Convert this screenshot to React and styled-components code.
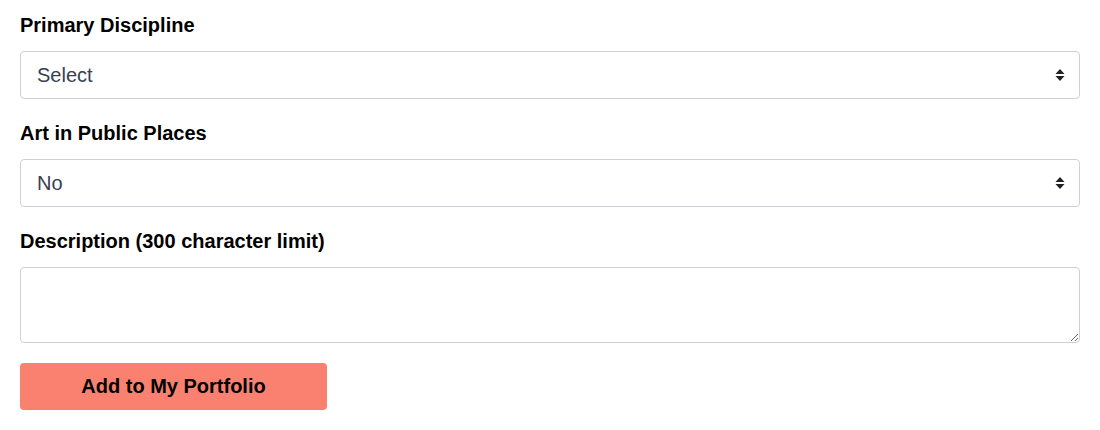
import React from "react";
import styled, { createGlobalStyle } from "styled-components";

const GlobalStyle = createGlobalStyle`
  body {
    margin: 0;
    background: #fff;
    font-family: "Liberation Sans", Arial, sans-serif;
  }
`;

const Form = styled.form`
  padding: 15px 20px;
  display: flex;
  flex-direction: column;
`;

const Field = styled.div`
  display: flex;
  flex-direction: column;
  margin-bottom: ${(p) => p.gap || 24}px;
`;

const Label = styled.label`
  font-size: 20px;
  font-weight: 700;
  line-height: 21px;
  color: #000;
  margin-bottom: 15px;
`;

const SelectWrap = styled.div`
  position: relative;
`;

const Select = styled.select`
  appearance: none;
  width: 100%;
  height: 48px;
  border: 1px solid #cdd1d6;
  border-radius: 4px;
  background: #fff;
  padding: 0 40px 0 16px;
  font-family: inherit;
  font-size: 20px;
  color: #374151;
`;

const Arrows = styled.svg`
  position: absolute;
  right: 15px;
  top: 50%;
  transform: translateY(-50%);
  pointer-events: none;
`;

const TextArea = styled.textarea`
  width: 100%;
  height: 76px;
  box-sizing: border-box;
  border: 1px solid #cdd1d6;
  border-radius: 4px;
  padding: 10px 16px;
  font-family: inherit;
  font-size: 20px;
`;

const Button = styled.button`
  width: 307px;
  height: 47px;
  border: none;
  border-radius: 4px;
  background: #fa8170;
  color: #000;
  font-family: inherit;
  font-size: 20px;
  font-weight: 700;
  cursor: pointer;
`;

const SelectField = ({ label, options }) => (
  <Field>
    <Label>{label}</Label>
    <SelectWrap>
      <Select defaultValue={options[0]}>
        {options.map((o) => (
          <option key={o}>{o}</option>
        ))}
      </Select>
      <Arrows width="10" height="14" viewBox="0 0 10 14">
        <path d="M5 1 L9.5 6 H0.5 Z" fill="#222" />
        <path d="M5 13 L9.5 8 H0.5 Z" fill="#222" />
      </Arrows>
    </SelectWrap>
  </Field>
);

const App = () => (
  <>
    <GlobalStyle />
    <Form onSubmit={(e) => e.preventDefault()}>
      <SelectField label="Primary Discipline" options={["Select", "Painting", "Sculpture", "Photography"]} />
      <SelectField label="Art in Public Places" options={["No", "Yes"]} />
      <Field gap={20}>
        <Label>Description (300 character limit)</Label>
        <TextArea maxLength={300} />
      </Field>
      <div>
        <Button type="submit">Add to My Portfolio</Button>
      </div>
    </Form>
  </>
);

export default App;
